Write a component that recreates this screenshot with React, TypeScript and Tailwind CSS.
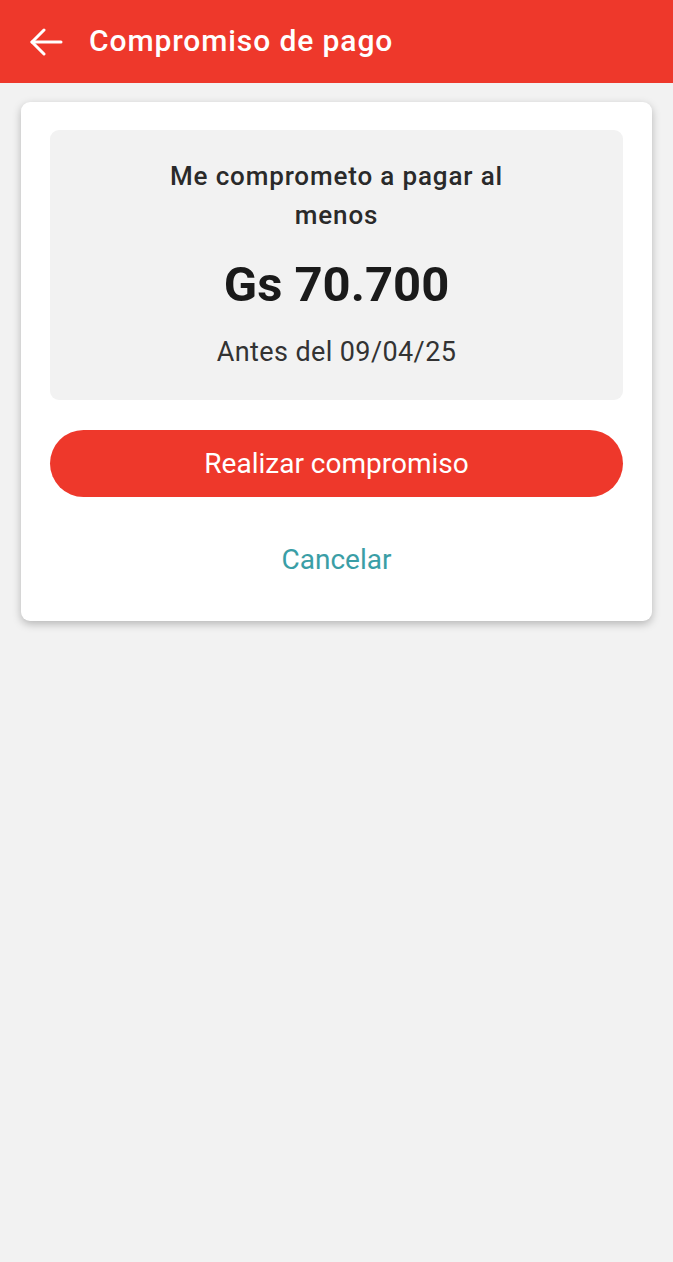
import React from "react";

export default function App() {
  return (
    <div className="min-h-[1262px] w-full bg-[#f2f2f2] flex flex-col" style={{ fontFamily: "Roboto, 'Noto Sans', sans-serif" }}>
      <header className="h-[83px] bg-[#ee382b] flex items-center pl-[29px] gap-[26px] shrink-0">
        <svg width="34" height="28" viewBox="0 0 34 28" fill="none" stroke="white" strokeWidth="3" strokeLinecap="round" strokeLinejoin="round">
          <path d="M3 14H32" />
          <path d="M15 2L3 14L15 26" />
        </svg>
        <h1 className="text-white text-[30px] font-medium leading-none tracking-[0.9px] pb-[2px]">Compromiso de pago</h1>
      </header>
      <div className="px-[21px] pt-[19px]">
        <div className="bg-white rounded-[9px] shadow-[0_3px_9px_rgba(0,0,0,0.25)] px-[29px] pt-[28px] pb-[47px] flex flex-col">
          <div className="bg-[#f2f2f2] rounded-[9px] flex flex-col items-center pt-[27px] pb-[34px]">
            <p className="text-[26px] font-medium text-[#2a2a2a] leading-[39px] text-center max-w-[380px] tracking-[0.85px]">
              Me comprometo a pagar al menos
            </p>
            <p className="text-[49px] font-bold text-[#1a1a1a] leading-none mt-[25px]">Gs 70.700</p>
            <p className="text-[27px] text-[#333333] leading-none mt-[30px] tracking-[0.4px]">Antes del 09/04/25</p>
          </div>
          <button className="mt-[30px] h-[67px] w-full rounded-full bg-[#ee382b] text-white text-[28px] flex items-center justify-center">
            Realizar compromiso
          </button>
          <button className="mt-[49px] text-[28px] text-[#3a9ea6] self-center leading-none">Cancelar</button>
        </div>
      </div>
    </div>
  );
}
